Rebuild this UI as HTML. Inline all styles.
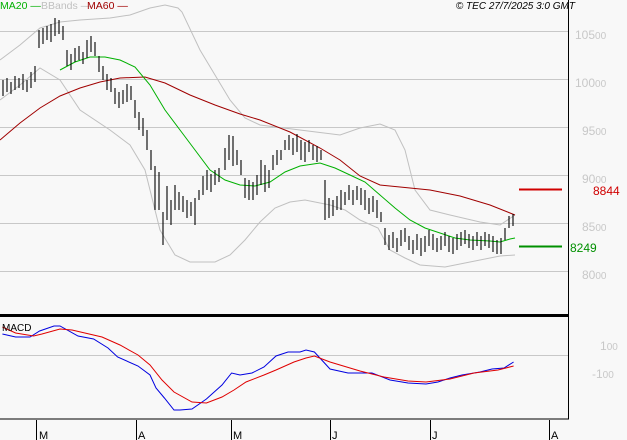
<!DOCTYPE html>
<html><head><meta charset="utf-8"><style>
body{margin:0;background:#f8f8f8;width:627px;height:440px;overflow:hidden;font-family:"Liberation Sans",sans-serif}
svg{position:absolute;left:0;top:0}
</style></head><body>
<svg width="627" height="440" viewBox="0 0 627 440" font-family="Liberation Sans, sans-serif">
<rect width="627" height="440" fill="#f8f8f8"/>
<g stroke="#c8c8c8" stroke-width="1">
<line x1="0" y1="31.5" x2="568" y2="31.5"/><line x1="0" y1="79.5" x2="568" y2="79.5"/>
<line x1="0" y1="127.5" x2="568" y2="127.5"/><line x1="0" y1="175.5" x2="568" y2="175.5"/>
<line x1="0" y1="223.5" x2="568" y2="223.5"/><line x1="0" y1="271.5" x2="568" y2="271.5"/>
<line x1="0" y1="355.5" x2="568" y2="355.5"/>
</g>
<g fill="none" stroke="#c0c0c0" stroke-width="1">
<polyline points="0,60 20,45 40,28 60,22 80,20 110,18 130,15 150,8 165,5 178,8 182,12 200,50 215,75 230,100 245,118 260,125 300,130 340,135 360,128 380,124 395,130 405,150 415,190 430,210 450,215 480,222 500,225 515,215"/>
<polyline points="0,100 20,85 40,68 60,80 80,110 110,130 130,145 145,170 160,230 175,255 190,262 215,262 230,255 245,240 260,222 275,208 290,202 305,200 330,205 345,210 360,220 378,228 390,250 405,258 420,265 445,267 470,262 500,256 515,255"/>
</g>
<polyline fill="none" stroke="#a00000" stroke-width="1" points="0,140 20,123 40,108 60,96 80,88 100,82 120,78 145,77 165,83 190,95 215,105 240,114 260,120 290,132 320,148 340,160 360,176 380,185 400,187 430,190 460,196 490,205 515,215"/>
<polyline fill="none" stroke="#00b000" stroke-width="1" points="60,70 75,62 90,57 105,57 120,60 135,67 150,85 165,110 180,130 195,150 210,170 225,180 240,185 255,186 270,182 285,172 300,166 320,163 335,168 350,175 365,182 380,195 395,208 410,220 425,228 440,233 455,238 470,240 490,241 500,242 510,239 515,238"/>
<path stroke="#000" stroke-width="1.1" fill="none" d="
M3 80V96 M7 78V92 M11 82V94 M15 76V90 M19 78V88 M23 74V90 M27 80V92 M31 72V88 M35 66V82
M39 30V48 M43 28V44 M47 26V40 M51 24V42 M55 18V36 M59 20V34 M63 26V40
M67 50V66 M71 54V70 M75 48V62 M79 46V60 M83 52V64 M87 40V58 M91 36V52 M95 42V56 M99 56V72
M103 66V80 M107 74V90 M111 78V92 M115 88V104 M119 92V108 M123 90V104 M127 84V102 M131 86V100
M135 100V118 M139 112V130 M143 118V136 M147 130V150
M151 150V170 M155 166V210 M159 172V210 M163 212V245 M167 186V220
M171 200V225 M175 185V210 M179 192V210 M183 196V212 M187 200V218 M191 202V216 M195 198V225
M199 190V200 M203 176V195 M207 170V190 M211 174V192 M215 170V185 M219 168V182
M225 148V170 M229 135V160 M233 136V166 M237 150V165 M241 160V175
M245 178V198 M249 180V200 M253 182V200 M257 175V195 M261 160V185 M265 165V192 M269 170V188 M273 155V170
M277 150V165 M281 150V160 M285 140V150 M289 135V150 M293 138V155 M297 134V152 M301 140V160 M305 142V162 M309 140V152 M313 145V160 M317 146V162 M321 150V160
M325 180V220 M329 198V218 M333 200V216 M337 196V210 M341 190V210 M345 192V205 M349 185V200 M353 190V205 M357 186V200 M361 188V205 M365 190V210 M369 198V214 M373 196V212 M377 200V218 M381 212V222
M385 228V245 M389 235V250 M393 232V248 M397 238V252 M401 230V246 M405 228V242 M409 236V250 M413 240V254 M417 234V250 M421 238V256 M425 236V252 M429 230V246 M433 234V250 M437 238V252 M441 236V250 M445 232V246 M449 236V252 M453 238V254 M457 234V250 M461 232V246 M465 230V244 M469 234V248 M473 236V250 M477 232V246 M481 236V250 M485 232V246 M489 234V248 M493 236V252 M497 240V254 M501 238V254 M505 228V240 M509 216V228 M513 214V226"/>
<rect x="0" y="314" width="569" height="3" fill="#000"/>
<line x1="568.5" y1="0" x2="568.5" y2="419" stroke="#000"/>
<line x1="0" y1="419" x2="569" y2="419" stroke="#000"/>
<g stroke="#000"><line x1="36.5" y1="420" x2="36.5" y2="440"/><line x1="136.5" y1="420" x2="136.5" y2="440"/><line x1="231.5" y1="420" x2="231.5" y2="440"/><line x1="330.5" y1="420" x2="330.5" y2="440"/><line x1="430.5" y1="420" x2="430.5" y2="440"/><line x1="549.5" y1="420" x2="549.5" y2="440"/></g>
<g font-size="11" fill="#000"><text x="39" y="439">M</text><text x="138" y="439">A</text><text x="233" y="439">M</text><text x="332" y="439">J</text><text x="432" y="439">J</text><text x="551" y="439">A</text></g>
<g transform="scale(1.2,1)" fill="none" stroke-width="1">
<polyline vector-effect="non-scaling-stroke" stroke="#0000e0" points="2,334 13,337 25,337 33,331 45,326 50,326 65,336 78,339 90,348 98,357 115,366 125,375 130,388 137,398 145,410 150,410 160,409 172,399 185,385 193,373 200,375 210,373 220,367 230,356 240,352 250,352 255,350 262,352 275,369 290,373 310,373 325,380 340,383 355,384 365,382 375,378 385,375 400,372 410,369 420,368 428,362"/>
<polyline vector-effect="non-scaling-stroke" stroke="#e00000" points="2,327 13,333 28,336 35,334 50,329 60,330 85,337 100,345 115,355 125,365 135,380 145,392 160,402 172,403 185,397 195,390 205,382 220,375 230,370 245,362 255,358 262,356 275,362 300,371 320,377 340,381 355,382 375,379 395,373 415,370 428,366"/>
</g>
<text x="2" y="331" font-size="10" fill="#000">MACD</text>
<g font-size="12" fill="#c8c8c8">
<text x="575" y="39">105<tspan font-size="10">00</tspan></text>
<text x="575" y="87">100<tspan font-size="10">00</tspan></text>
<text x="582" y="135">95<tspan font-size="10">00</tspan></text>
<text x="582" y="183">90<tspan font-size="10">00</tspan></text>
<text x="582" y="231">85<tspan font-size="10">00</tspan></text>
<text x="582" y="279">80<tspan font-size="10">00</tspan></text>
<text x="600" y="350">1<tspan font-size="10">00</tspan></text>
<text x="592" y="378">-1<tspan font-size="10">00</tspan></text>
</g>
<line x1="519" y1="189.5" x2="562" y2="189.5" stroke="#d00000" stroke-width="2"/>
<line x1="519" y1="246.5" x2="562" y2="246.5" stroke="#009000" stroke-width="2"/>
<text x="593" y="195" font-size="12" fill="#d00000">8844</text>
<text x="570" y="252" font-size="12" fill="#009000">8249</text>
<g font-size="10.5"><text x="0" y="9" fill="#00b000">MA20 —</text><text x="41" y="9" fill="#c0c0c0">BBands —</text><text x="87" y="9" fill="#a00000">MA60 —</text></g>
<text x="575" y="9" font-size="10" font-style="italic" fill="#000" text-anchor="end">© TEC 27/7/2025 3:0 GMT</text>
</svg>
</body></html>
